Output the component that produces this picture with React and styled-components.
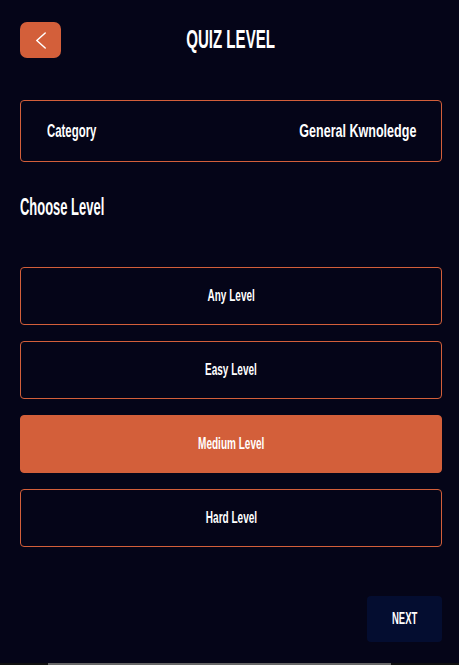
import styled, { createGlobalStyle } from 'styled-components'

const Global = createGlobalStyle`
  html, body { margin: 0; padding: 0; background: #050518; }
  body { font-family: "Liberation Sans", Arial, sans-serif; color: #fff; }
  * { box-sizing: border-box; }
`

const levels = ['Any Level', 'Easy Level', 'Medium Level', 'Hard Level']

export default function App() {
  const selected = 2
  return (
    <>
      <Global />
      <Page>
        <Header>
          <BackButton aria-label="back">
            <svg width="12" height="17" viewBox="0 0 12 17" fill="none">
              <path d="M10.2 1 L1.8 8.5 L10.2 16" stroke="#fff" strokeWidth="1.5" strokeLinecap="round" strokeLinejoin="round" />
            </svg>
          </BackButton>
          <Title><Narrow sx={0.58}>QUIZ LEVEL</Narrow></Title>
        </Header>

        <CategoryBox>
          <Narrow origin="left" sx={0.6}>Category</Narrow>
          <Narrow origin="right" sx={0.66}>General Kwnoledge</Narrow>
        </CategoryBox>

        <SectionTitle><Narrow origin="left" sx={0.54}>Choose Level</Narrow></SectionTitle>

        <LevelList>
          {levels.map((name, i) => (
            <LevelButton key={name} active={i === selected}>
              <Narrow sx={0.59}>{name}</Narrow>
            </LevelButton>
          ))}
        </LevelList>

        <Footer>
          <NextButton><Narrow sx={0.56}>NEXT</Narrow></NextButton>
        </Footer>
      </Page>
      <ScrollTrack><ScrollThumb /></ScrollTrack>
    </>
  )
}

const Narrow = styled.span`
  display: inline-block;
  white-space: nowrap;
  transform: scaleX(${({ sx }) => sx || 0.6});
  transform-origin: ${({ origin }) => origin || 'center'};
`

const Page = styled.div`
  min-height: 663px;
  padding: 22px 17px 0 20px;
  display: flex;
  flex-direction: column;
`

const Header = styled.div`
  position: relative;
  height: 36px;
  display: flex;
  align-items: center;
  justify-content: center;
`

const BackButton = styled.button`
  position: absolute;
  left: 0;
  top: 0;
  width: 41px;
  height: 36px;
  border: none;
  border-radius: 7px;
  background: #d35f3a;
  display: flex;
  align-items: center;
  justify-content: center;
  padding: 0;
`

const Title = styled.h1`
  margin: -2px 0 0;
  font-size: 26px;
  line-height: 30px;
  font-weight: 700;
`

const CategoryBox = styled.div`
  margin-top: 42px;
  height: 62px;
  border: 1px solid #d35f3a;
  border-radius: 4px;
  display: flex;
  align-items: center;
  justify-content: space-between;
  padding: 0 25px 0 26px;
  font-size: 19px;
  font-weight: 700;
`

const SectionTitle = styled.h2`
  margin: 33px 0 0;
  font-size: 24px;
  font-weight: 700;
  line-height: 24px;
`

const LevelList = styled.div`
  margin-top: 48px;
  display: flex;
  flex-direction: column;
  gap: 16px;
`

const LevelButton = styled.button`
  height: 58px;
  width: 100%;
  border: 1px solid #d35f3a;
  border-radius: 4px;
  background: ${({ active }) => (active ? '#d35f3a' : 'transparent')};
  color: #fff;
  font-family: inherit;
  font-size: 17px;
  font-weight: 700;
  padding: 0;
`

const Footer = styled.div`
  margin-top: 49px;
  display: flex;
  justify-content: flex-end;
`

const NextButton = styled.button`
  width: 75px;
  height: 46px;
  border: none;
  border-radius: 4px;
  background: #040d30;
  color: #fff;
  font-family: inherit;
  font-size: 17px;
  font-weight: 700;
  padding: 0;
`

const ScrollTrack = styled.div`
  height: 2px;
  background: #111;
  position: relative;
`

const ScrollThumb = styled.div`
  position: absolute;
  left: 48px;
  width: 343px;
  top: 0;
  height: 2px;
  background: #666;
`
